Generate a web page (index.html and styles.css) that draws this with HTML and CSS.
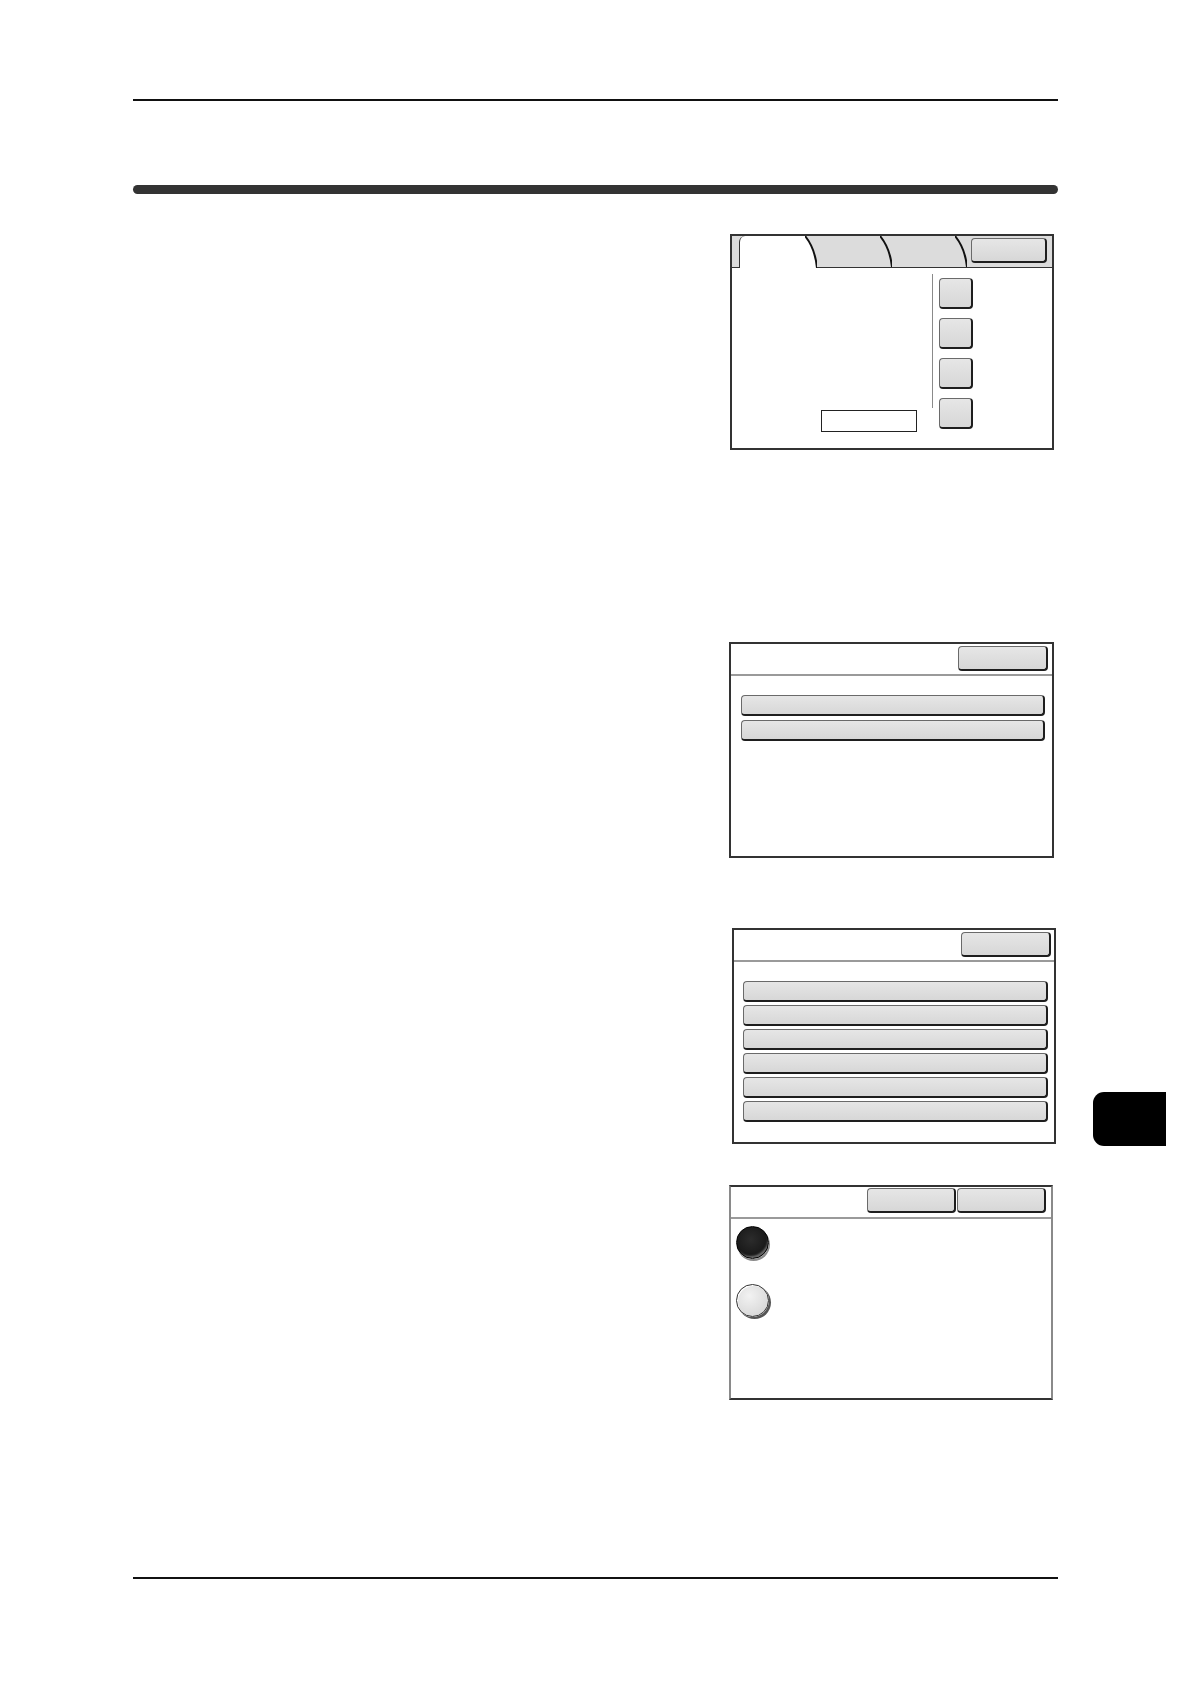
FILE: index.html
```html
<!DOCTYPE html>
<html lang="en">
<head>
<meta charset="utf-8">
<title>Manual page</title>
<link rel="stylesheet" href="styles.css">
</head>
<body>
<div class="page">
  <div class="rule"></div>
  <div class="title-bar"></div>

  <div class="layout">
    <div class="text-col"></div>

    <div class="panel-col">
      <!-- Panel 1: tabbed screen -->
      <div class="panel panel-tabs">
        <div class="tabbar">
          <div class="tab-stub"></div>
          <div class="tab tab-active"></div>
          <svg class="tab-sep tab-sep-first" viewBox="0 0 12 32" preserveAspectRatio="none" aria-hidden="true">
            <path d="M0,0 Q10,12 12,32 L0,32 Z" fill="#fff"/>
            <path d="M0,0 Q10,12 12,32" fill="none" stroke="#111" stroke-width="2"/>
          </svg>
          <div class="tab tab-2"></div>
          <svg class="tab-sep" viewBox="0 0 12 31" preserveAspectRatio="none" aria-hidden="true">
            <path d="M0,0 Q10,12 12,31" fill="none" stroke="#111" stroke-width="2"/>
          </svg>
          <div class="tab tab-3"></div>
          <svg class="tab-sep" viewBox="0 0 12 31" preserveAspectRatio="none" aria-hidden="true">
            <path d="M0,0 Q10,12 12,31" fill="none" stroke="#111" stroke-width="2"/>
          </svg>
          <div class="tab-end"><div class="key key-tab"></div></div>
        </div>
        <div class="tabs-body">
          <div class="tabs-left"><div class="field"></div></div>
          <div class="vdivider"></div>
          <div class="side-keys">
            <div class="key key-square"></div>
            <div class="key key-square"></div>
            <div class="key key-square"></div>
            <div class="key key-square"></div>
          </div>
        </div>
      </div>

      <!-- Panel 2: two-item list -->
      <div class="panel panel-list panel-2">
        <div class="panel-head"><div class="key key-head"></div></div>
        <div class="list list-2">
          <div class="key key-row"></div>
          <div class="key key-row"></div>
        </div>
      </div>

      <!-- Panel 3: six-item list -->
      <div class="panel panel-list panel-3">
        <div class="panel-head"><div class="key key-head"></div></div>
        <div class="list list-3">
          <div class="key key-row"></div>
          <div class="key key-row"></div>
          <div class="key key-row"></div>
          <div class="key key-row"></div>
          <div class="key key-row"></div>
          <div class="key key-row"></div>
        </div>
      </div>

      <!-- Panel 4: radio choice -->
      <div class="panel panel-radio">
        <div class="panel-head head-two">
          <div class="key key-head2"></div>
          <div class="key key-head2"></div>
        </div>
        <div class="radios">
          <div class="radio radio-on"></div>
          <div class="radio radio-off"></div>
        </div>
      </div>
    </div>

    <div class="margin-col">
      <div class="thumb-tab"></div>
    </div>
  </div>

  <div class="rule rule-bottom"></div>
</div>
</body>
</html>
```

FILE: styles.css
```css
* { box-sizing: border-box; }

html, body {
  margin: 0;
  background: #fff;
  font-family: "Liberation Sans", Arial, sans-serif;
}

.page {
  width: 1190px;
  min-height: 1684px;
  padding: 99px 132px 0 133px;
}

.rule {
  height: 2px;
  background: #111;
}

.title-bar {
  margin-top: 84px;
  height: 9px;
  border-radius: 5px;
  background: #333;
}

.layout {
  display: grid;
  grid-template-columns: 596px 327px 2px;
  margin-top: 40px;
}

.panel-col {
  display: flex;
  flex-direction: column;
}

.panel {
  width: 325px;
  height: 216px;
  border: 2px solid #333;
  background: #fff;
  overflow: hidden;
}

/* ---------- Panel 1 ---------- */
.panel-tabs { margin-left: 1px; width: 324px; }

.tabbar {
  display: flex;
  height: 32px;
  background: #dcdcdc;
  border-bottom: 1px solid #333;
}

.tab-stub { width: 7px; }

.tab-active {
  width: 66px;
  background: #fff;
  border-left: 1px solid #333;
  border-top-left-radius: 6px;
  margin-bottom: -1px;
}

.tab-sep {
  width: 12px;
  height: 31px;
  flex: none;
  display: block;
}

.tab-sep-first {
  height: 32px;
  margin-bottom: -1px;
}

.tab-2 { width: 63px; }
.tab-3 { width: 63px; }

.tab-end {
  flex: 1;
  padding: 2px 4px 0 4px;
}

.key {
  background: linear-gradient(#e6e6e6, #d7d7d7);
  border-style: solid;
  border-color: #6a6a6a #1e1e1e #1e1e1e #6a6a6a;
  border-width: 1px 2px 2px 1px;
  border-radius: 4px;
}

.key-tab { width: 76px; height: 25px; }

.tabs-body {
  display: flex;
  height: 180px;
}

.tabs-left {
  width: 200px;
  display: flex;
  align-items: flex-end;
  justify-content: flex-end;
  padding: 0 15px 16px 0;
}

.field {
  width: 96px;
  height: 22px;
  border: 1px solid #222;
  background: #fff;
}

.vdivider {
  width: 1px;
  height: 134px;
  margin-top: 6px;
  background: #8a8a8a;
}

.side-keys {
  display: flex;
  flex-direction: column;
  gap: 9px;
  padding: 10px 0 0 6px;
}

.key-square { width: 34px; height: 31px; }

/* ---------- List panels ---------- */
.panel-head {
  display: flex;
  justify-content: flex-end;
  height: 32px;
  padding: 2px 4px 0 0;
  border-bottom: 2px solid #9a9a9a;
}

.key-head { width: 90px; height: 25px; }

.list {
  display: flex;
  flex-direction: column;
}

.list-2 {
  gap: 4px;
  padding: 19px 7px 0 10px;
}

.panel-2 { margin-top: 192px; }

.panel-3 {
  margin-top: 70px;
  margin-left: 3px;
  width: 324px;
}

.panel-3 .panel-head { padding-right: 3px; }

.list-3 {
  gap: 3px;
  padding: 19px 6px 0 9px;
}

.key-row { height: 21px; }

/* ---------- Radio panel ---------- */
.panel-radio {
  margin-top: 41px;
  width: 324px;
  height: 215px;
  border-color: #333 #8a8a8a #333 #8a8a8a;
}

.head-two {
  gap: 1px;
  padding: 1px 5px 0 0;
}

.key-head2 { width: 89px; height: 25px; }

.radios {
  display: flex;
  flex-direction: column;
  gap: 25px;
  padding: 7px 0 0 5px;
}

.radio {
  width: 33px;
  height: 33px;
  border-radius: 50%;
}

.radio-on {
  background: radial-gradient(circle at 45% 40%, #2c2c2c 0%, #1a1a1a 60%, #121212 100%);
  border: 1px solid #000;
  box-shadow: inset -2px -4px 2px -2px #6a6a6a, 1px 2px 0 #8a8a8a;
}

.radio-off {
  background: radial-gradient(circle at 40% 35%, #f2f2f2 0%, #dedede 60%, #d0d0d0 100%);
  border: 1px solid #333;
  box-shadow: inset 1px 1px 0 #fff, 2px 2px 0 #555;
}

/* ---------- Page-edge thumb index ---------- */
.thumb-tab {
  margin-top: 858px;
  margin-left: 37px;
  width: 73px;
  height: 54px;
  background: #000;
  border-radius: 11px 0 0 11px;
}

.rule-bottom { margin-top: 177px; }
```
